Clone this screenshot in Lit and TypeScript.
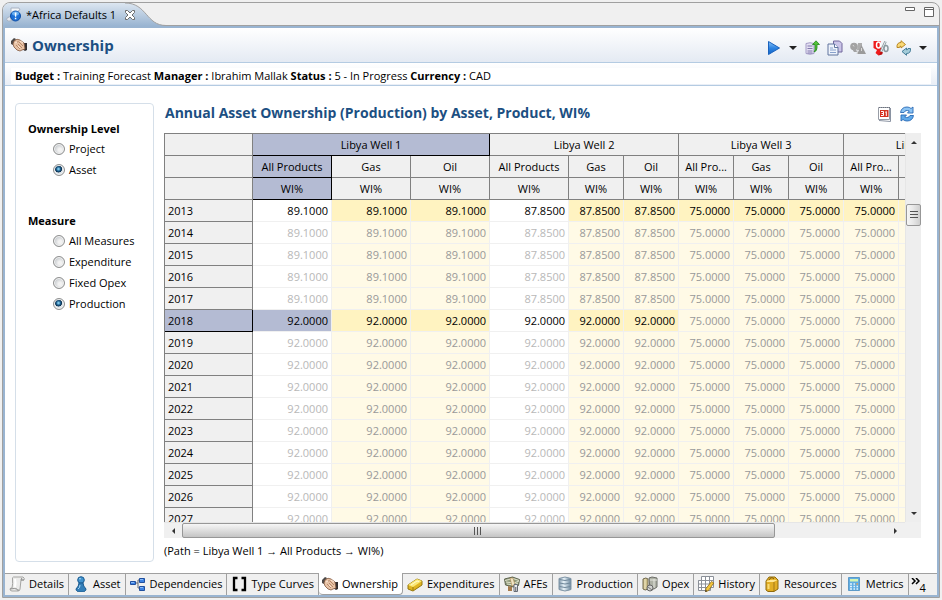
import { LitElement, html, svg, css, nothing } from "lit";
import { customElement, state } from "lit/decorators.js";
import { classMap } from "lit/directives/class-map.js";

const icons = {
  editor: svg`<path d="M5 1h8l1 2-2 1v9H5z" fill="#f4f6f9" stroke="#a9b3c2"/><path d="M1 11l4-2v5H2q-2-1-1-3z" fill="#e3e7ee" stroke="#a9b3c2"/><circle cx="9.500" cy="9" r="5" fill="#1c6fd6" stroke="#0d4ea6"/><ellipse cx="9.500" cy="6.500" rx="3.500" ry="2" fill="#66aef2"/><path d="M8.700 5.500h1.800l-.3 4.200H9zM8.800 10.700h1.500v1.500H8.800z" fill="#fff"/>`,
  hands: svg`<path d="M0 4l3-3 2 1-3 6-2-1z" fill="#4d4a49"/><path d="M16 6h-3l-2 6 3 2 2-1z" fill="#2f2d2f"/><path d="M3 4q3-3 6-1l4 3 1 6-3 1-2 1-3-1-3-3-1-3z" fill="#e8c3a6" stroke="#80563c" stroke-width=".8"/><path d="M6 5q2-1 3 1l3 3M5 8l4 4M7 7l4 4" fill="none" stroke="#a87a5b" stroke-width=".8"/><path d="M9 4l3 2M7 9l2 2M4 6l2-1" stroke="#fbe6d5"/>`,
  run: svg`<path d="M2.500 1.500v13l11-6.500z" fill="url(#runFill)" stroke="#1a62bd"/><defs><linearGradient id="runFill" x2="0" y2="1"><stop stop-color="#8cc5f8"/><stop offset=".5" stop-color="#2d84e2"/><stop offset="1" stop-color="#1263c6"/></linearGradient></defs>`,
  export: svg`<path d="M2 3.500q4-1.500 8 0v10q-4 1.500-8 0z" fill="#e4e0f3" stroke="#a49cc6"/><path d="M3.500 6h5M3.500 8.500h5M3.500 11h5M3.500 13h5" stroke="#7f76ab"/><path d="M13 4.500V8q0 3-3 4 1.500-2 1-4V4.500H8.500L12 .8l3.500 3.700z" fill="#54c33a" stroke="#23851a" stroke-width=".8"/>`,
  copy: svg`<path d="M6.500 1h6l2.500 2.500V12H6.500z" fill="#cbc5e8" stroke="#70679c"/><path d="M1 4h6.500L11 7.500V15H1z" fill="#eef3fb" stroke="#60749e"/><path d="M7.500 4v3.500H11" fill="#fff" stroke="#60749e"/><path d="M3 8h3M3 10h6M3 12.500h6" fill="none" stroke="#88a2cc"/>`,
  weights: svg`<circle cx="4" cy="6.500" r="3.800" fill="#a3a3a3"/><path d="M2 9h4l1 3H4z" fill="#a3a3a3"/><path d="M8 3h4v3l-2 4H7z" fill="#acacac"/><path d="M11.500 5l4.500 9H7z" fill="#9b9b9b"/><path d="M3 5l1 1.500M11.500 8v3" stroke="#dadada"/><path d="M8 10l-1 4" stroke="#d2d2d2"/>`,
  percent: svg`<path d="M.5 1h7l1 9v3l-3 2.500L2.500 13 4 10 .5 8z" fill="#ee1c1c"/><path d="M8 11.500l2 1-1 2-3.500 1z" fill="#b90f0f"/><g fill="none"><ellipse cx="5.500" cy="5" rx="2" ry="3" stroke="#fff" stroke-width="1.500"/><path d="M12.500 1.500l-4.500 10" stroke="#8b9a9f" stroke-width="2.500"/><path d="M12.500 1.500l-4.500 10" stroke="#eef3f4"/><ellipse cx="13" cy="8.500" rx="2" ry="3" stroke="#8b9a9f" stroke-width="1.500"/></g>`,
  swap: svg`<path d="M1 7.500Q.5 2.500 5 2.500V.7L9.500 4.500 5 8V6.200Q3.500 6 3.500 7.500z" fill="#f9d976" stroke="#b27e17" stroke-width=".9"/><path d="M14.500 8.500q.5 5-4 5v1.800L6 11.500 10.500 8v1.800q1.500.2 1.500-1.300z" fill="#a4ccd9" stroke="#35728e" stroke-width=".9"/>`,
  calendar: svg`<path d="M2.500 1.500h11v12h-11z" fill="#fff" stroke="#989da6"/><path d="M3 14.500l11.500 1V2" fill="none" stroke="#8a93a2"/><path d="M4 4h8.500v7H4z" fill="#d4301f"/><path d="M5 5.500h2.500v4H5M5.500 7.500h2M9.300 6.300l1-.8v4.500" fill="none" stroke="#fff"/><path d="M3 1.500h11" stroke="#6b717d" stroke-dasharray="1 1"/>`,
  refresh: svg`<path d="M1.500 6.500Q2.500 1 8 1q2.500 0 4 1.500l2-1.500v6H8.500l1.800-2Q6.500 3.500 5 6.500z" fill="#8cc4f4" stroke="#2869b4" stroke-width=".9"/><path d="M14.500 9.500Q13.500 15 8 15q-2.500 0-4-1.500L2 15V9h5.500l-1.800 2q3.800 1.500 5.300-1.500z" fill="#5fa9ea" stroke="#2869b4" stroke-width=".9"/>`,
  details: svg`<path d="M4.500 1H14q2 1 1 3h-3l-1 9q0 2-2 2H3q-2 0-2-2 0-1 2-1 1-5 .5-8-.5-3 1-3z" fill="#ececeb" stroke="#a4a4a2"/><path d="M1 13q5-1 7 0 0 2 2 1M13 2q-1 1-1 2h3" fill="none" stroke="#8f8f8e"/><path d="M6 3q1 3 0 8" stroke="#fff" stroke-width="2" fill="none"/>`,
  asset: svg`<circle cx="8" cy="4" r="3.300" fill="#4293ce" stroke="#1a5a8f"/><path d="M6 7h4q0 3 3 6 0 3-5 3t-5-3q3-3 3-6z" fill="#347fb9" stroke="#1a5a8f"/><path d="M6 3q1-1 2 0M7 9q0 3-2 4" stroke="#a9d9f5" fill="none"/>`,
  dependencies: svg`<path d="M5 7h3M8 4v8M8 4h2M8 12h2" stroke="#646a74" fill="none"/><path d="M.5 5.500h5v3h-5zM9.500 2.500h5v4h-5zM9.500 10.500h5v4h-5z" fill="#3c82e4" stroke="#204f9e"/><path d="M1 6.500h3M10 3.500h3M10 11.500h3" stroke="#88baf8"/>`,
  curves: svg`<path d="M6.500 2H3v12h3.500M10.500 2H14v12h-3.500" fill="none" stroke="#000" stroke-width="2.300"/>`,
  gold: svg`<path d="M1 9l9-6 5 2v4l-9 6-5-2z" fill="#dfb421" stroke="#94770e"/><path d="M1 9l9-6 5 2-9 6z" fill="#fbe878"/><path d="M6 11v3" stroke="#957710"/><path d="M4 9l6-4 2 .5" stroke="#fffbd0" fill="none"/>`,
  afes: svg`<path d="M.5 3l8-2 7 2.500-1 6-5 1.500-8-2z" fill="#909a7b" stroke="#5f6550"/><path d="M1 4.500l8-2 6 2M3 8l7 1 4-2M2 6l8 1 5-2" fill="none" stroke="#dfe2cc"/><path d="M6 2l2 8 3-1-2-7z" fill="#efe4c4" stroke="#a6783d" stroke-width=".5"/><path d="M4 10l4 1v4H4z" fill="#a67b4c"/><path d="M10 8.500h3.500v7H10z" fill="#eceef2" stroke="#666b75"/><path d="M11.800 11v4" stroke="#555"/>`,
  production: svg`<path d="M2 2.500Q8-.5 14 2.500v11q-6 3-12 0z" fill="url(#canFill)" stroke="#7f95a6"/><path d="M2.500 3.500q5.500 2 11 0M2.500 7q5.500 2 11 0M2.500 10.500q5.500 2 11 0" fill="none" stroke="#6f879a"/><defs><linearGradient id="canFill"><stop stop-color="#8299ac"/><stop offset=".4" stop-color="#eaf4fa"/><stop offset="1" stop-color="#6b879d"/></linearGradient></defs>`,
  opex: svg`<path d="M1 3q3-2 5 0v10q-3 2-5 0z" fill="#cdbf8b" stroke="#70694f"/><path d="M3 3v10" stroke="#f2e9c6"/><path d="M7 2l3-1 5 1v9l-3 2H8z" fill="#aeb1a5" stroke="#6d6e68"/><path d="M8 4h7M12 3v9" stroke="#e5e6df"/><circle cx="8" cy="12" r="3" fill="#d2d3d0" stroke="#666"/><path d="M6 11l4 3" stroke="#777"/>`,
  history: svg`<path d="M3.500.5h12v11h-3v3H.5v-10h3z" fill="#fff" stroke="#8b9098"/><path d="M.5 4.500h15M.5 8h15M.5 11.500h12M3.500 4.500v10M7.500.5v14M11.500.5v11" stroke="#8b9098" fill="none"/><path d="M13.500 5.500l2.300 1.500-5.300 7.500-3 1.300.5-3.300z" fill="#f4c73b" stroke="#8d6716" stroke-width=".8"/><path d="M7.300 16l.4-2 1.500 1z" fill="#222"/>`,
  resources: svg`<path d="M2 5l3-4h6l3 3v9l-4 2.500H4L2 14z" fill="#e2ae24" stroke="#8f6a0d"/><path d="M2.500 5q5-2 11-1l-4 2H3z" fill="#ffe794"/><path d="M10 6v9" stroke="#a37914"/><path d="M5 4q2-4 5-1" fill="none" stroke="#7b5a0d"/><path d="M4.500 8v5" stroke="#f9db74" stroke-width="2"/>`,
  metrics: svg`<path d="M2.500 1.500h11v13h-11z" fill="#62aee2" stroke="#5d9ac8"/><path d="M4 3h8v2.500H4z" fill="#d5f4b5"/><path d="M4 8h2M7.500 8H9M4 10.500h2M7.500 10.500H9M4 13h2M7.500 13H9M10.500 10.500H12M10.500 13H12" stroke="#e4f3fc" stroke-width="1.500"/><path d="M10.500 8H12" stroke="#f0a04b" stroke-width="1.500"/>`,
};

type IconName = keyof typeof icons;

const icon = (name: IconName) =>
  html`<svg class="icon" viewBox="0 0 16 16" aria-hidden="true">${icons[name]}</svg>`;

const views: [string, IconName][] = [
  ["Details", "details"],
  ["Asset", "asset"],
  ["Dependencies", "dependencies"],
  ["Type Curves", "curves"],
  ["Ownership", "hands"],
  ["Expenditures", "gold"],
  ["AFEs", "afes"],
  ["Production", "production"],
  ["Opex", "opex"],
  ["History", "history"],
  ["Resources", "resources"],
  ["Metrics", "metrics"],
];

const wells = ["Libya Well 1", "Libya Well 2", "Libya Well 3", "Libya Well 4"];
const years = Array.from({ length: 15 }, (_, i) => 2013 + i);

function interest(well: number, year: number): string {
  if (well > 1) return "75.0000";
  if (year >= 2018) return "92.0000";
  return well === 0 ? "89.1000" : "87.8500";
}

@customElement("app-root")
export class AppRoot extends LitElement {
  @state() private level = "Asset";
  @state() private measure = "Production";
  @state() private view = "Ownership";

  static styles = css`
    :host {
      display: block;
      height: 100vh;
      box-sizing: border-box;
      padding: 2px;
      background: #f0f0f0;
      font: 11px/16px "Open Sans", "Noto Sans", sans-serif;
      color: #000;
    }
    * { box-sizing: border-box; }
    button {
      font: inherit;
      color: inherit;
      background: none;
      border: 0;
      padding: 0;
      margin: 0;
    }
    .icon { width: 16px; height: 16px; flex: none; display: block; }
    .frame {
      height: 100%;
      display: flex;
      flex-direction: column;
      border: 1px solid #a0a0a0;
      border-radius: 8px 8px 0 0;
      overflow: hidden;
    }
    .tabbar {
      position: relative;
      display: flex;
      justify-content: space-between;
      flex: none;
      height: 23px;
      border-bottom: 1px solid #a0a0a0;
    }
    .tabshape { position: absolute; left: 0; top: 0; width: 170px; height: 23px; }
    .editor { position: relative; display: flex; align-items: center; gap: 4px; padding: 1px 3px 0; }
    .editor button { margin-left: 4px; }
    .close, .win { display: block; }
    .winbtns { display: flex; gap: 8px; padding: 4px 4px 0 0; }
    .winbtns button { height: 12px; }
    .pane {
      flex: 1;
      min-height: 0;
      display: flex;
      flex-direction: column;
      border: 2px solid #99b4d1;
      background: #fff;
    }
    .head {
      flex: none;
      display: flex;
      align-items: center;
      justify-content: space-between;
      height: 35px;
      padding: 0 10px 0 6px;
      background: linear-gradient(#fff, #e4eaf3);
      border-bottom: 1px solid #b4cbe2;
    }
    h1, h2, h3 { margin: 0; color: #1c4f82; }
    h1 { display: flex; align-items: center; gap: 5px; font-size: 15px; line-height: 20px; }
    h2 { font-size: 14px; line-height: 20px; }
    h3 { font-size: 11px; line-height: 16px; color: #000; }
    .tools { display: flex; align-items: center; gap: 7px; padding-top: 6px; }
    .tools button { display: block; }
    .drop { width: 8px; display: block; }
    .info {
      flex: none;
      height: 23px;
      padding: 5px 6px 1px;
      background: linear-gradient(#fff, #e9eef6);
      border-bottom: 1px solid #b4cbe2;
    }
    .info p { margin: 0; padding: 0 4px; background: #fff; white-space: nowrap; }
    .body {
      flex: 1;
      min-height: 0;
      display: flex;
      gap: 10px;
      padding: 17px 16px 11px 10px;
    }
    .filters {
      flex: none;
      width: 139px;
      padding: 17px 12px;
      border: 1px solid #d5dfe9;
      border-radius: 4px;
    }
    fieldset { border: 0; padding: 0; margin: 0 0 33px; }
    legend { padding: 0; margin-bottom: 1px; }
    .choice { display: flex; align-items: center; gap: 4px; height: 21px; padding-left: 25px; white-space: nowrap; }
    input {
      appearance: none;
      width: 12px;
      height: 12px;
      margin: 0;
      border: 1px solid #8e8f8f;
      border-radius: 50%;
      background: radial-gradient(circle at 60% 60%, #f2f2f2 20%, #c4c8cc 70%);
      box-shadow: inset 0 0 0 1px #f4f4f4;
    }
    input:checked {
      background: radial-gradient(circle at 45% 40%, #7cc6ea 8%, #1a5b8a 26%, #0c2f4d 40%, #dde3e8 46%);
    }
    .main { flex: 1; min-width: 0; display: flex; flex-direction: column; }
    .title { flex: none; display: flex; align-items: center; justify-content: space-between; height: 20px; padding: 0 6px 0 1px; }
    .title div { display: flex; gap: 7px; padding-top: 2px; }
    .grid {
      flex: 1;
      min-height: 0;
      display: grid;
      grid-template-columns: minmax(0, 1fr) 16px;
      grid-template-rows: minmax(0, 1fr) 16px;
      margin-top: 10px;
      background: #f0f0f0;
    }
    .view { overflow: auto; scrollbar-width: none; border: solid #808080; border-width: 1px 0 0 1px; background: #fff; }
    table { width: 843px; table-layout: fixed; border-collapse: separate; border-spacing: 0; }
    .years { width: 88px; }
    .wide { width: 79px; }
    .slim { width: 55px; }
    th, td {
      height: 22px;
      line-height: 20px;
      white-space: nowrap;
      overflow: hidden;
      font-weight: 400;
      border: solid #808080;
      border-width: 0 1px 1px 0;
    }
    th { background: #f0f0f0; padding: 0 3px; }
    tbody th { text-align: left; }
    td { text-align: right; border-color: #f0f0f0; color: #b8b8b8; background: #fff; padding: 0 3px 0 2px; }
    td.tint { background: #fffae6; color: #999; }
    td.edited { color: #000; }
    td.tint.edited { background: #fff3c1; }
    th.on, td.on { background: #b4bbd3; }
    th.on { border-color: #000; }
    .vbar, .hbar { display: flex; align-items: center; background: #f0f0f0; border: solid #e6e6e6; }
    .vbar { flex-direction: column; border-width: 0 0 0 1px; background: #eee; }
    .hbar { border-width: 1px 0 0; }
    .vbar button { width: 15px; height: 17px; display: grid; place-items: center; }
    .hbar button { width: 18px; height: 15px; display: grid; place-items: center; }
    .thumb { display: flex; align-items: center; justify-content: center; border: 1px solid #979797; border-radius: 2px; }
    .vthumb { width: 15px; height: 22px; margin-top: 54px; margin-bottom: auto; background: linear-gradient(90deg, #f6f6f6, #e8e8e8 45%, #cfcfcf); }
    .hthumb { width: 80%; height: 15px; margin-right: auto; background: linear-gradient(#f6f6f6, #e0e0e0 45%, #c4c4c4); }
    .path { flex: none; margin: 5px 0 3px; }
    .views {
      flex: none;
      display: flex;
      height: 22px;
      background: #f0f0f0;
      border-top: 1px solid #a0a0a0;
    }
    .views button {
      display: flex;
      align-items: center;
      gap: 4px;
      padding: 0 4px 1px;
      border-right: 1px solid #a0a0a0;
      white-space: nowrap;
    }
    .views button.current {
      margin-top: -1px;
      padding: 1px 4px 0 3px;
      background: #fff;
      border-bottom: 1px solid #a0a0a0;
      border-radius: 0 0 4px 4px;
    }
    .views button.more { border: 0; gap: 0; padding: 0 2px; }
    .more svg { align-self: flex-start; margin-top: 4px; }
    .more span { padding-top: 6px; }
  `;

  private choices(name: string, legend: string, options: string[], value: string, set: (v: string) => void) {
    return html`<fieldset>
      <legend><h3>${legend}</h3></legend>
      ${options.map(
        (o) => html`<label class="choice">
          <input type="radio" name=${name} .checked=${o === value} @change=${() => set(o)} />${o}
        </label>`
      )}
    </fieldset>`;
  }

  private tool(name: IconName, label: string) {
    return html`<button aria-label=${label}>${icon(name)}</button>`;
  }

  private drop(label: string) {
    return html`<button aria-label=${label}>
      <svg class="drop" viewBox="0 0 8 8" width="8" height="8"><path d="M0 2h8L4 6z" fill="#222" /></svg>
    </button>`;
  }

  private arrow(label: string, d: string) {
    return html`<button aria-label=${label}><svg width="8" height="8" viewBox="0 0 8 8"><path d=${d} fill="#333" /></svg></button>`;
  }

  private row(year: number) {
    const picked = year === 2018;
    return html`<tr>
      <th scope="row" class=${classMap({ on: picked })}>${year}</th>
      ${wells.map((_, w) =>
        [0, 1, 2].map((p) => {
          const on = picked && w === 0 && p === 0;
          const edited = year === 2013 || (picked && w < 2);
          return html`<td class=${classMap({ tint: w > 1 || p > 0, edited, on })}>${interest(w, year)}</td>`;
        })
      )}
    </tr>`;
  }

  render() {
    return html`<div class="frame">
      <div class="tabbar">
        <svg class="tabshape" viewBox="0 0 170 23" aria-hidden="true">
          <defs>
            <linearGradient id="tab" x2="0" y2="1"><stop stop-color="#dce6f1" /><stop offset="1" stop-color="#99b4d1" /></linearGradient>
          </defs>
          <path d="M0 0H122C144 0 143 22.500 163 22.500V23H0z" fill="url(#tab)" />
          <path d="M122 0C144 0 143 22.500 163 22.500H170" fill="none" stroke="#a0a0a0" />
        </svg>
        <div class="editor">
          ${icon("editor")}<span>*Africa Defaults 1</span>
          <button aria-label="Close">
            <svg class="close" width="12" height="12" viewBox="0 0 12 12">
              <path d="M1.500 1.500h2L6 4l2.500-2.500h2v2L8 6l2.500 2.500v2h-2L6 8l-2.500 2.500h-2v-2L4 6 1.500 3.500z" fill="#fff" stroke="#6d6d6d" />
            </svg>
          </button>
        </div>
        <div class="winbtns">
          <button aria-label="Minimize"><svg class="win" width="11" height="12" viewBox="0 0 11 12"><path d="M.5.500h9v3h-9z" fill="#fff" stroke="#666" /></svg></button>
          <button aria-label="Maximize"><svg class="win" width="11" height="12" viewBox="0 0 11 12"><path d="M.5.500h9v9h-9zM.5 2.500h9" fill="#fff" stroke="#666" /></svg></button>
        </div>
      </div>
      <div class="pane">
        <header class="head">
          <h1>${icon("hands")}Ownership</h1>
          <div class="tools">
            ${this.tool("run", "Run")}${this.drop("Run options")}${this.tool("export", "Export")}
            ${this.tool("copy", "Copy")}${this.tool("weights", "Weights")}${this.tool("percent", "Percent")}
            ${this.tool("swap", "Switch")}${this.drop("Switch options")}
          </div>
        </header>
        <div class="info">
          <p><b>Budget :</b> Training Forecast <b>Manager :</b> Ibrahim Mallak <b>Status :</b> 5 - In Progress <b>Currency :</b> CAD</p>
        </div>
        <div class="body">
          <aside class="filters">
            ${this.choices("level", "Ownership Level", ["Project", "Asset"], this.level, (v) => (this.level = v))}
            ${this.choices("measure", "Measure", ["All Measures", "Expenditure", "Fixed Opex", "Production"], this.measure, (v) => (this.measure = v))}
          </aside>
          <main class="main">
            <div class="title">
              <h2>Annual Asset Ownership (Production) by Asset, Product, WI%</h2>
              <div>${this.tool("calendar", "Calendar")}${this.tool("refresh", "Refresh")}</div>
            </div>
            <div class="grid">
              <div class="view">
                <table>
                  <colgroup>
                    <col class="years" />
                    ${wells.map((_, w) => [0, 1, 2].map((p) => html`<col class=${w === 0 || (w === 1 && p === 0) ? "wide" : "slim"} />`))}
                  </colgroup>
                  <thead>
                    <tr>
                      <th></th>
                      ${wells.map((name, w) => html`<th colspan="3" class=${classMap({ on: w === 0 })}>${name}</th>`)}
                    </tr>
                    <tr>
                      <th></th>
                      ${wells.map((_, w) =>
                        [w < 2 ? "All Products" : "All Pro...", "Gas", "Oil"].map(
                          (p, i) => html`<th class=${classMap({ on: w + i === 0 })}>${p}</th>`
                        )
                      )}
                    </tr>
                    <tr>
                      <th></th>
                      ${wells.map((_, w) => [0, 1, 2].map((p) => html`<th class=${classMap({ on: w + p === 0 })}>WI%</th>`))}
                    </tr>
                  </thead>
                  <tbody>${years.map((y) => this.row(y))}</tbody>
                </table>
              </div>
              <div class="vbar">
                ${this.arrow("Scroll up", "M1 6h6L4 3z")}
                <div class="thumb vthumb"><svg width="8" height="8" viewBox="0 0 8 8"><path d="M0 .5h8M0 3.500h8M0 6.500h8" stroke="#555" /></svg></div>
                ${this.arrow("Scroll down", "M1 2h6L4 5z")}
              </div>
              <div class="hbar">
                ${this.arrow("Scroll left", "M6 1v6L3 4z")}
                <div class="thumb hthumb"><svg width="8" height="8" viewBox="0 0 8 8"><path d="M.5 0v8M3.500 0v8M6.500 0v8" stroke="#555" /></svg></div>
                ${this.arrow("Scroll right", "M2 1v6L5 4z")}
              </div>
            </div>
            <p class="path">(Path = Libya Well 1 → All Products → WI%)</p>
          </main>
        </div>
        <nav class="views">
          ${views.map(
            ([name, glyph]) => html`<button
              class=${classMap({ current: name === this.view })}
              aria-current=${name === this.view ? "page" : nothing}
              @click=${() => (this.view = name)}
            >${icon(glyph)}${name}</button>`
          )}
          <button class="more" aria-label="4 more views">
            <svg width="9" height="8" viewBox="0 0 9 8"><path d="M1 0l3 3-3 3M5 0l3 3-3 3" fill="none" stroke="#000" stroke-width="1.500" /></svg><span>4</span>
          </button>
        </nav>
      </div>
    </div>`;
  }
}
